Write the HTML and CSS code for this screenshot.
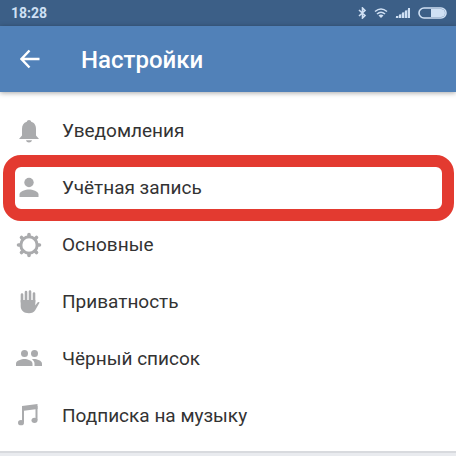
FILE: index.html
```html
<!DOCTYPE html>
<html lang="ru">
<head>
    <meta charset="UTF-8">
    <meta name="viewport" content="width=device-width, initial-scale=1.0">
    <title>Настройки</title>
    <link rel="stylesheet" href="styles.css">
</head>
<body>

<div class="statusbar">
    <span class="time">18:28</span>
    <div class="status-icons">
        <svg width="9" height="12" viewBox="0 0 9 12">
            <path d="M1 3l6 5.500-2.500 2.500V1L7 3.500 1 9" fill="none" stroke="currentColor" stroke-width="1.600"/>
        </svg>
        <svg width="14" height="12" viewBox="0 0 14 12">
            <path d="M1 4.500Q7-.5 13 4.500M3 7Q7 3.500 11 7" fill="none" stroke="currentColor" stroke-width="1.600"/>
            <path d="M4.500 8.500Q7 6.500 9.500 8.500L7 11z" fill="currentColor"/>
        </svg>
        <svg width="16" height="12" viewBox="0 0 16 12">
            <path d="M0 11L15 1v10z" fill="currentColor" opacity="0.4"/>
            <path d="M1 9h2v2H1zM4 7.500h2V11H4zM7 5.500h2V11H7zM10 3.500h2V11h-2zM13 1h2v10h-2z" fill="currentColor"/>
        </svg>
        <svg width="29" height="12" viewBox="0 0 29 12">
            <rect x="1" y="1" width="27" height="10" rx="5" fill="none" stroke="currentColor" stroke-width="1.600"/>
            <path d="M13 2h10a4 4 0 0 1 0 8H13z" fill="currentColor"/>
        </svg>
    </div>
</div>

<header class="toolbar">
    <button class="back" aria-label="Назад">
        <svg width="20" height="20" viewBox="0 0 20 20">
            <path d="M19.500 10H1.500M9.500 1.500L1.500 10l8 8.500" fill="none" stroke="currentColor" stroke-width="2.400"/>
        </svg>
    </button>
    <h1>Настройки</h1>
</header>

<nav class="menu">
    <a class="item" href="#notifications">
        <svg class="icon" viewBox="0 0 26 26">
            <path d="M13 2c1.200 0 2 .7 2.200 1.800C18.600 4.800 20 7.700 20 11v6.500l3 3.500H3l3-3.500V11c0-3.300 1.400-6.200 4.800-7.200C11 2.700 11.800 2 13 2zM10 22.300h6c-.4 1.400-1.500 2.200-3 2.200s-2.600-.8-3-2.200z"/>
        </svg>
        Уведомления
    </a>
    <a class="item selected" href="#account">
        <svg class="icon" viewBox="0 0 26 26">
            <circle cx="13" cy="7.500" r="4.700"/>
            <path d="M3.500 22v-2.500c0-3.400 6.300-5 9.500-5s9.500 1.600 9.500 5V22z"/>
        </svg>
        Учётная запись
    </a>
    <a class="item" href="#general">
        <svg class="icon" viewBox="0 0 26 26">
            <circle cx="13" cy="13" r="8.200" fill="none" stroke="currentColor" stroke-width="3"/>
            <path d="M13 4.500v-2M13 21.500v2M4.500 13h-2M21.500 13h2M7 7L5.500 5.500M19 7l1.500-1.500M7 19l-1.500 1.500M19 19l1.500 1.500" stroke="currentColor" stroke-width="3.600" stroke-linecap="round"/>
        </svg>
        Основные
    </a>
    <a class="item" href="#privacy">
        <svg class="icon" viewBox="0 0 26 26">
            <path d="M6 13V5.500M10 12V3M14 12V2.500M18 13V4.500" fill="none" stroke="currentColor" stroke-width="2.600" stroke-linecap="round"/>
            <path d="M4.700 11h14.600v5.500l2-2.800c.6-.9 1.600-.9 2.300-.2l-4.400 7.700c-1.200 2-3.200 3-6.200 3-5.200 0-8.300-2.500-8.300-7.200z"/>
        </svg>
        Приватность
    </a>
    <a class="item" href="#blacklist">
        <svg class="icon" viewBox="0 0 26 26">
            <circle cx="8.500" cy="7.500" r="3.500"/>
            <circle cx="18.500" cy="7.500" r="3.500"/>
            <path d="M0 20v-2.300c0-3 5.600-4.600 8.500-4.600s8 1.600 8 4.600V20zM18.500 20v-2.300c0-1.900-1-3.300-2.500-4.400 3-.8 10 .9 10 4.400V20z"/>
        </svg>
        Чёрный список
    </a>
    <a class="item" href="#music">
        <svg class="icon" viewBox="0 0 26 26">
            <path d="M6 3L21.500 1v5L6 8z"/>
            <path d="M7 4v15M20.500 3v14" fill="none" stroke="currentColor" stroke-width="2"/>
            <ellipse cx="5" cy="19.700" rx="3" ry="2.600"/>
            <ellipse cx="18.500" cy="17.300" rx="3" ry="2.600"/>
        </svg>
        Подписка на музыку
    </a>
</nav>

</body>
</html>
```
FILE: styles.css
```css
body {
    display: flex;
    flex-direction: column;
    min-height: 100vh;
    margin: 0;
    background-color: #e9ebef;
    color: #333;
    font-family: Roboto, "Noto Sans", sans-serif;
}
.statusbar {
    display: flex;
    align-items: center;
    justify-content: space-between;
    height: 26px;
    padding: 0 9px 0 11px;
    background-color: #3c5f87;
    color: #cfe0f4;
}
.time {
    font-size: 14px;
    font-weight: 700;
}
.status-icons {
    display: flex;
    align-items: center;
    gap: 7px;
}
.toolbar {
    display: flex;
    align-items: center;
    gap: 41px;
    height: 66px;
    padding: 0 20px;
    background-color: #5181b8;
    color: #fff;
    box-shadow: 0 1px 5px rgba(0, 0, 0, 0.35);
    z-index: 1;
}
.back {
    display: flex;
    padding: 0;
    border: none;
    background: none;
    color: inherit;
    cursor: pointer;
}
h1 {
    margin: 0;
    padding-top: 2px;
    font-size: 24px;
    font-weight: 500;
}
.menu {
    padding: 10px 0 7px;
    background-color: #fff;
    border-bottom: 2px solid #d8dade;
}
.item {
    display: flex;
    align-items: center;
    gap: 20px;
    height: 57px;
    padding: 0 16px;
    color: inherit;
    font-size: 19px;
    text-decoration: none;
}
.icon {
    width: 26px;
    height: 26px;
    color: #aaabad;
    fill: currentColor;
}
.selected {
    position: relative;
}
.selected::after {
    content: "";
    position: absolute;
    top: -4px;
    right: 2px;
    bottom: -5px;
    left: 3px;
    border: 12px solid #e33a30;
    border-radius: 18px;
}
```
